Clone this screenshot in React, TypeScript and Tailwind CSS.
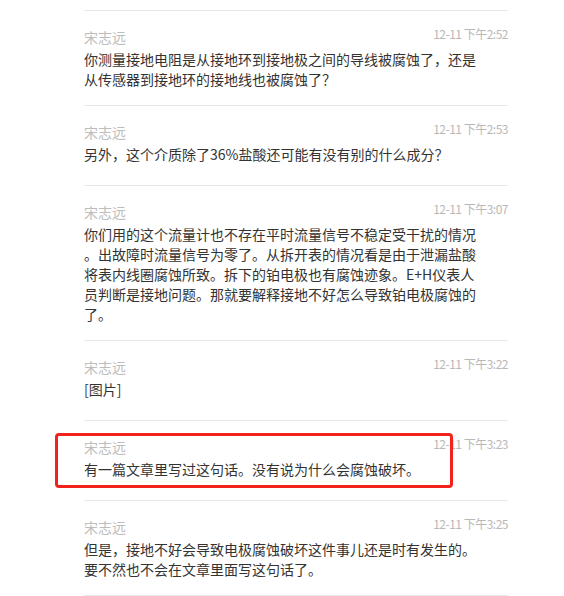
const font = {
  fontFamily: '"Noto Sans CJK SC", "Noto Sans", sans-serif',
};

type Comment = {
  name: string;
  time: string;
  lines: string[];
};

const comments: Comment[] = [
  {
    name: "宋志远",
    time: "12-11 下午2:52",
    lines: [
      "你测量接地电阻是从接地环到接地极之间的导线被腐蚀了，还是",
      "从传感器到接地环的接地线也被腐蚀了？",
    ],
  },
  {
    name: "宋志远",
    time: "12-11 下午2:53",
    lines: ["另外，这个介质除了36%盐酸还可能有没有别的什么成分？"],
  },
  {
    name: "宋志远",
    time: "12-11 下午3:07",
    lines: [
      "你们用的这个流量计也不存在平时流量信号不稳定受干扰的情况",
      "。出故障时流量信号为零了。从拆开表的情况看是由于泄漏盐酸",
      "将表内线圈腐蚀所致。拆下的铂电极也有腐蚀迹象。E+H仪表人",
      "员判断是接地问题。那就要解释接地不好怎么导致铂电极腐蚀的",
      "了。",
    ],
  },
  {
    name: "宋志远",
    time: "12-11 下午3:22",
    lines: ["[图片]"],
  },
  {
    name: "宋志远",
    time: "12-11 下午3:23",
    lines: ["有一篇文章里写过这句话。没有说为什么会腐蚀破坏。"],
  },
  {
    name: "宋志远",
    time: "12-11 下午3:25",
    lines: [
      "但是，接地不好会导致电极腐蚀破坏这件事儿还是时有发生的。",
      "要不然也不会在文章里面写这句话了。",
    ],
  },
];

function CommentItem({ c }: { c: Comment }) {
  return (
    <div className="border-t border-[#e8e8e8] pt-[16px] pb-[16px]">
      <div className="flex items-start justify-between">
        <span className="text-[14px] leading-[20px] text-[#bdbdbd]">{c.name}</span>
        <span className="text-[12px] leading-[14px] tracking-[-0.5px] text-[#b8b8b8]">{c.time}</span>
      </div>
      <div className="mt-[2px] min-h-[25px] text-[14px] leading-[20px] text-[#333333]">
        {c.lines.map((l, i) => (
          <div key={i} className="whitespace-nowrap">
            {l}
          </div>
        ))}
      </div>
    </div>
  );
}

export default function App() {
  return (
    <div className="relative h-[596px] w-[564px] overflow-hidden bg-white" style={font}>
      <div className="ml-[84px] w-[424px] pt-[10px]">
        {comments.map((c, i) => (
          <CommentItem key={i} c={c} />
        ))}
        <div className="border-t border-[#e8e8e8]" />
      </div>
      {/* annotation box */}
      <div className="absolute left-[55px] top-[433px] h-[55px] w-[398px] rounded-[4px] border-[3px] border-[#f2231c]" />
    </div>
  );
}
